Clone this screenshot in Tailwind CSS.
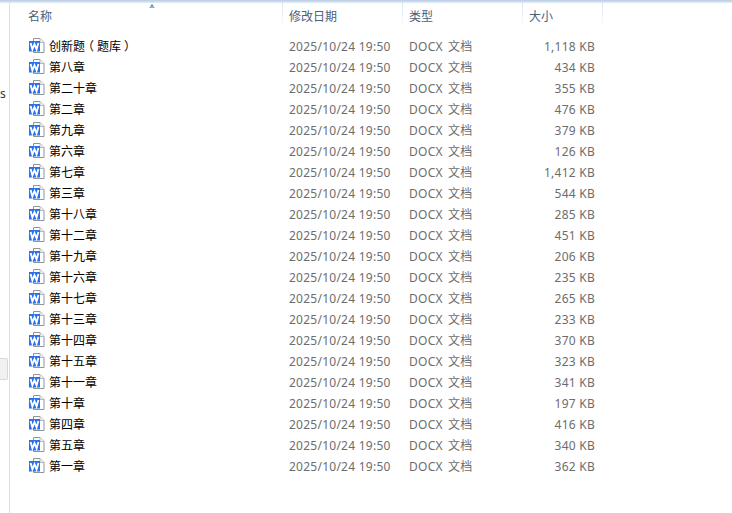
<!DOCTYPE html>
<html lang="zh">
<head>
<meta charset="utf-8">
<script src="https://cdn.jsdelivr.net/npm/@tailwindcss/browser@4"></script>
</head>
<body class="bg-white">
<svg width="0" height="0" class="absolute">
  <symbol id="w" viewBox="0 0 16 15">
    <path d="M4.5 0.5H11L15 4.5V14.5H4.5Z" fill="#fff" stroke="#8f949a"/>
    <path d="M11 0.5V4.5H15" fill="#f1f3f5" stroke="#b4b8bd"/>
    <rect x="0" y="3" width="11" height="10.5" fill="#2a72e8"/>
    <path d="M1.6 5L3.4 11.4L5.5 6.2L7.6 11.4L9.4 5" fill="none" stroke="#fff" stroke-width="1.9"/>
  </symbol>
</svg>
<div class="flex h-[513px] w-[732px] flex-col overflow-hidden bg-white font-['Noto_Sans','Noto_Sans_CJK_SC',sans-serif] text-[12px]">
  <div class="h-[3px] shrink-0 bg-gradient-to-b from-[#b7cbe2] to-[#e6eef6]"></div>
  <div class="flex min-h-0 flex-1">
    <aside class="relative h-full w-[10px] shrink-0 border-r border-[#d8e3f0]">
      <span class="absolute left-0 top-[82px] text-[#333]">s</span>
      <div class="absolute left-0 top-[355px] h-[22px] w-[8px] rounded-r-[2px] border border-l-0 border-[#d8d8d8] bg-[#f1f1f1]"></div>
    </aside>
    <main class="min-w-0 flex-1">
      <div class="relative grid h-[33px] grid-cols-[273px_120px_120px_80px] text-[#4c607a]">
        <svg class="absolute left-[139px] top-[1px]" width="6" height="4" viewBox="0 0 6 4"><path d="M0 4L3 0L6 4Z" fill="#8fb0c8"/><path d="M2 2L3 0L4 2Z" fill="#47769a"/></svg>
        <div class="flex h-[24px] justify-between"><span class="pl-[18px] pt-[5px] leading-[18px]">名称</span><i class="w-px bg-gradient-to-b from-[#d5e4f3] to-white"></i></div>
        <div class="flex h-[24px] justify-between"><span class="pl-[6px] pt-[5px] leading-[18px]">修改日期</span><i class="w-px bg-gradient-to-b from-[#d5e4f3] to-white"></i></div>
        <div class="flex h-[24px] justify-between"><span class="pl-[6px] pt-[5px] leading-[18px]">类型</span><i class="w-px bg-gradient-to-b from-[#d5e4f3] to-white"></i></div>
        <div class="flex h-[24px] justify-between"><span class="pl-[6px] pt-[5px] leading-[18px]">大小</span><i class="w-px bg-gradient-to-b from-[#d5e4f3] to-white"></i></div>
      </div>
      <div class="grid grid-cols-[273px_120px_120px_80px] auto-rows-[21px] items-center text-[#6d6d6d] tracking-[0.25px]">
        <div class="flex items-center gap-[4px] pl-[19px] tracking-normal text-black"><svg class="mb-[2px] h-[15px] w-[16px]"><use href="#w"/></svg><span>创新题<span class="inline-block -translate-x-[3px]">（</span>题库<span class="inline-block translate-x-[3px]">）</span></span></div><div class="pl-[6px]">2025/10/24 19:50</div><div class="pl-[6px] [word-spacing:2px]">DOCX 文档</div><div class="pr-[8px] text-right">1,118 KB</div>
        <div class="flex items-center gap-[4px] pl-[19px] tracking-normal text-black"><svg class="mb-[2px] h-[15px] w-[16px]"><use href="#w"/></svg>第八章</div><div class="pl-[6px]">2025/10/24 19:50</div><div class="pl-[6px] [word-spacing:2px]">DOCX 文档</div><div class="pr-[8px] text-right">434 KB</div>
        <div class="flex items-center gap-[4px] pl-[19px] tracking-normal text-black"><svg class="mb-[2px] h-[15px] w-[16px]"><use href="#w"/></svg>第二十章</div><div class="pl-[6px]">2025/10/24 19:50</div><div class="pl-[6px] [word-spacing:2px]">DOCX 文档</div><div class="pr-[8px] text-right">355 KB</div>
        <div class="flex items-center gap-[4px] pl-[19px] tracking-normal text-black"><svg class="mb-[2px] h-[15px] w-[16px]"><use href="#w"/></svg>第二章</div><div class="pl-[6px]">2025/10/24 19:50</div><div class="pl-[6px] [word-spacing:2px]">DOCX 文档</div><div class="pr-[8px] text-right">476 KB</div>
        <div class="flex items-center gap-[4px] pl-[19px] tracking-normal text-black"><svg class="mb-[2px] h-[15px] w-[16px]"><use href="#w"/></svg>第九章</div><div class="pl-[6px]">2025/10/24 19:50</div><div class="pl-[6px] [word-spacing:2px]">DOCX 文档</div><div class="pr-[8px] text-right">379 KB</div>
        <div class="flex items-center gap-[4px] pl-[19px] tracking-normal text-black"><svg class="mb-[2px] h-[15px] w-[16px]"><use href="#w"/></svg>第六章</div><div class="pl-[6px]">2025/10/24 19:50</div><div class="pl-[6px] [word-spacing:2px]">DOCX 文档</div><div class="pr-[8px] text-right">126 KB</div>
        <div class="flex items-center gap-[4px] pl-[19px] tracking-normal text-black"><svg class="mb-[2px] h-[15px] w-[16px]"><use href="#w"/></svg>第七章</div><div class="pl-[6px]">2025/10/24 19:50</div><div class="pl-[6px] [word-spacing:2px]">DOCX 文档</div><div class="pr-[8px] text-right">1,412 KB</div>
        <div class="flex items-center gap-[4px] pl-[19px] tracking-normal text-black"><svg class="mb-[2px] h-[15px] w-[16px]"><use href="#w"/></svg>第三章</div><div class="pl-[6px]">2025/10/24 19:50</div><div class="pl-[6px] [word-spacing:2px]">DOCX 文档</div><div class="pr-[8px] text-right">544 KB</div>
        <div class="flex items-center gap-[4px] pl-[19px] tracking-normal text-black"><svg class="mb-[2px] h-[15px] w-[16px]"><use href="#w"/></svg>第十八章</div><div class="pl-[6px]">2025/10/24 19:50</div><div class="pl-[6px] [word-spacing:2px]">DOCX 文档</div><div class="pr-[8px] text-right">285 KB</div>
        <div class="flex items-center gap-[4px] pl-[19px] tracking-normal text-black"><svg class="mb-[2px] h-[15px] w-[16px]"><use href="#w"/></svg>第十二章</div><div class="pl-[6px]">2025/10/24 19:50</div><div class="pl-[6px] [word-spacing:2px]">DOCX 文档</div><div class="pr-[8px] text-right">451 KB</div>
        <div class="flex items-center gap-[4px] pl-[19px] tracking-normal text-black"><svg class="mb-[2px] h-[15px] w-[16px]"><use href="#w"/></svg>第十九章</div><div class="pl-[6px]">2025/10/24 19:50</div><div class="pl-[6px] [word-spacing:2px]">DOCX 文档</div><div class="pr-[8px] text-right">206 KB</div>
        <div class="flex items-center gap-[4px] pl-[19px] tracking-normal text-black"><svg class="mb-[2px] h-[15px] w-[16px]"><use href="#w"/></svg>第十六章</div><div class="pl-[6px]">2025/10/24 19:50</div><div class="pl-[6px] [word-spacing:2px]">DOCX 文档</div><div class="pr-[8px] text-right">235 KB</div>
        <div class="flex items-center gap-[4px] pl-[19px] tracking-normal text-black"><svg class="mb-[2px] h-[15px] w-[16px]"><use href="#w"/></svg>第十七章</div><div class="pl-[6px]">2025/10/24 19:50</div><div class="pl-[6px] [word-spacing:2px]">DOCX 文档</div><div class="pr-[8px] text-right">265 KB</div>
        <div class="flex items-center gap-[4px] pl-[19px] tracking-normal text-black"><svg class="mb-[2px] h-[15px] w-[16px]"><use href="#w"/></svg>第十三章</div><div class="pl-[6px]">2025/10/24 19:50</div><div class="pl-[6px] [word-spacing:2px]">DOCX 文档</div><div class="pr-[8px] text-right">233 KB</div>
        <div class="flex items-center gap-[4px] pl-[19px] tracking-normal text-black"><svg class="mb-[2px] h-[15px] w-[16px]"><use href="#w"/></svg>第十四章</div><div class="pl-[6px]">2025/10/24 19:50</div><div class="pl-[6px] [word-spacing:2px]">DOCX 文档</div><div class="pr-[8px] text-right">370 KB</div>
        <div class="flex items-center gap-[4px] pl-[19px] tracking-normal text-black"><svg class="mb-[2px] h-[15px] w-[16px]"><use href="#w"/></svg>第十五章</div><div class="pl-[6px]">2025/10/24 19:50</div><div class="pl-[6px] [word-spacing:2px]">DOCX 文档</div><div class="pr-[8px] text-right">323 KB</div>
        <div class="flex items-center gap-[4px] pl-[19px] tracking-normal text-black"><svg class="mb-[2px] h-[15px] w-[16px]"><use href="#w"/></svg>第十一章</div><div class="pl-[6px]">2025/10/24 19:50</div><div class="pl-[6px] [word-spacing:2px]">DOCX 文档</div><div class="pr-[8px] text-right">341 KB</div>
        <div class="flex items-center gap-[4px] pl-[19px] tracking-normal text-black"><svg class="mb-[2px] h-[15px] w-[16px]"><use href="#w"/></svg>第十章</div><div class="pl-[6px]">2025/10/24 19:50</div><div class="pl-[6px] [word-spacing:2px]">DOCX 文档</div><div class="pr-[8px] text-right">197 KB</div>
        <div class="flex items-center gap-[4px] pl-[19px] tracking-normal text-black"><svg class="mb-[2px] h-[15px] w-[16px]"><use href="#w"/></svg>第四章</div><div class="pl-[6px]">2025/10/24 19:50</div><div class="pl-[6px] [word-spacing:2px]">DOCX 文档</div><div class="pr-[8px] text-right">416 KB</div>
        <div class="flex items-center gap-[4px] pl-[19px] tracking-normal text-black"><svg class="mb-[2px] h-[15px] w-[16px]"><use href="#w"/></svg>第五章</div><div class="pl-[6px]">2025/10/24 19:50</div><div class="pl-[6px] [word-spacing:2px]">DOCX 文档</div><div class="pr-[8px] text-right">340 KB</div>
        <div class="flex items-center gap-[4px] pl-[19px] tracking-normal text-black"><svg class="mb-[2px] h-[15px] w-[16px]"><use href="#w"/></svg>第一章</div><div class="pl-[6px]">2025/10/24 19:50</div><div class="pl-[6px] [word-spacing:2px]">DOCX 文档</div><div class="pr-[8px] text-right">362 KB</div>
      </div>
    </main>
  </div>
</div>
</body>
</html>
